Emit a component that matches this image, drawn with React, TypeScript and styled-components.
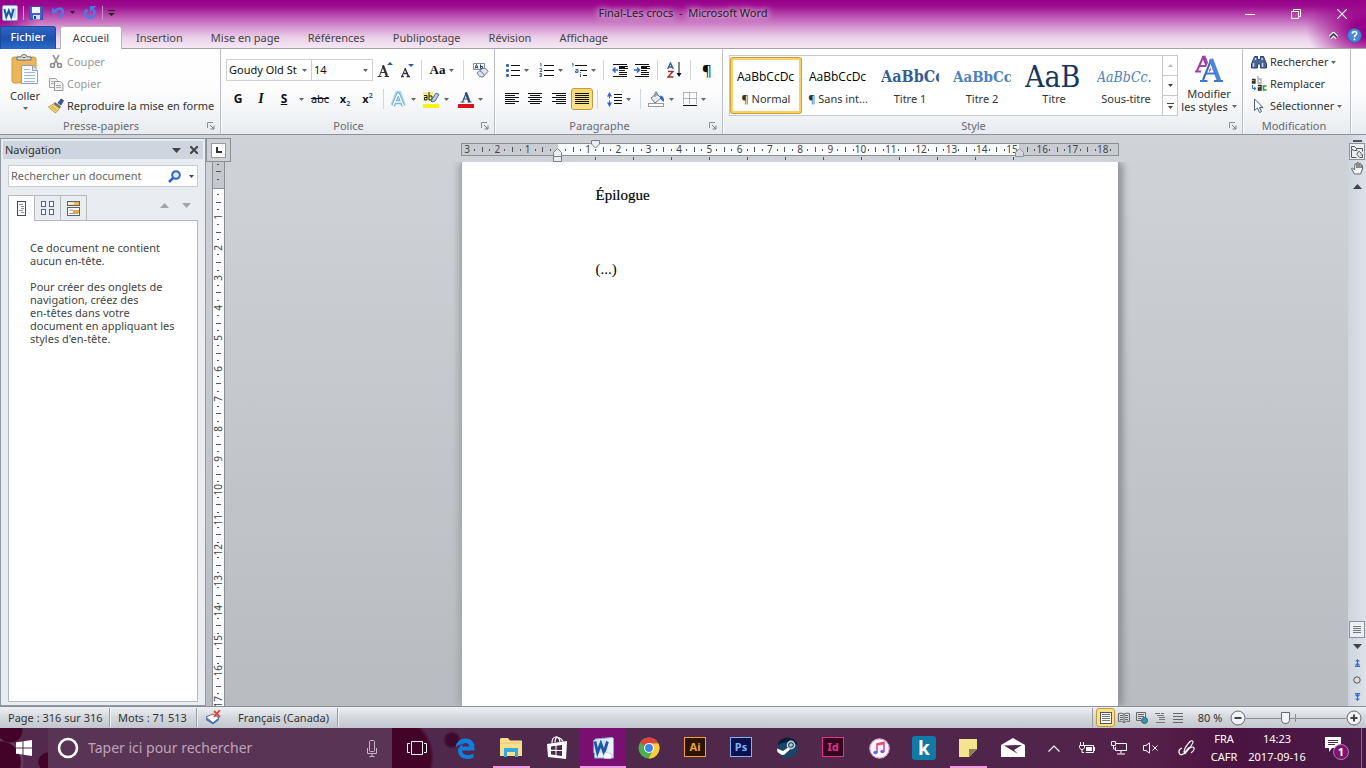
import React from "react";
import styled, { createGlobalStyle, css } from "styled-components";

const Global = createGlobalStyle`
  *, *::before, *::after { box-sizing: border-box; }
  body { margin: 0; font-family: "Noto Sans", "Open Sans", sans-serif; font-size: 11px; line-height: 14px; color: #333; overflow: hidden; }
  button, input, select { font: inherit; color: inherit; margin: 0; padding: 0; border: 0; background: none; }
  button { cursor: pointer; }
  h1, h2, p, ul { margin: 0; padding: 0; font-weight: normal; }
  svg { display: block; flex: none; }
`;

/* ---------- generic pieces ---------- */

const Icon = ({ w = 16, h = 16, box, children }: { w?: number; h?: number; box?: string; children: React.ReactNode }) => (
  <svg width={w} height={h} viewBox={box || `0 0 ${w} ${h}`} fill="none" aria-hidden="true">{children}</svg>
);
const Caret = ({ color = "#666" }: { color?: string }) => (
  <Icon w={5} h={3}><path d="M0 0h5L2.5 3z" fill={color} /></Icon>
);

/* ---------- window ---------- */

const Window = styled.div`
  display: flex; flex-direction: column; height: 100vh; min-height: 500px; background: #c8ccd1;
`;

const Header = styled.header`
  flex: none; display: flex; flex-direction: column; height: 49px;
  border-bottom: 1px solid #a3a1aa;
  background:
    radial-gradient(ellipse 60px 44px at 100% 60%, #98008a 20%, rgba(152, 0, 138, 0) 100%),
    radial-gradient(ellipse 40px 40px at 0 30%, #98008a 10%, rgba(152, 0, 138, 0) 100%),
    linear-gradient(#97008a 0, #9c0c90 6px, #bb55b3 17px, #d596d0 27px, #ecd2ea 38px, #f5e8f4 48px);
`;
const TitleBar = styled.div`
  display: grid; grid-template-columns: 1fr auto 1fr; height: 25px; align-items: center;
`;
const QuickAccess = styled.div`
  display: flex; align-items: center; height: 22px; padding-left: 2px; gap: 5px;
`;
const QuickButton = styled.button<{ $lead?: number }>`
  display: flex; align-items: center; gap: 5px; margin-left: ${p => p.$lead ?? 0}px;
`;
const QuickRule = styled.span`width: 1px; height: 14px; background: #cf8dca;`;
const Title = styled.h1`
  font-size: 11px; line-height: 14px; color: #222; white-space: pre;
  text-shadow: 0 0 6px #fff, 0 0 8px #f3d8f1;
`;
const WindowButtons = styled.div`display: flex; justify-content: flex-end; padding: 3px 1px 0 0;`;
const WindowButton = styled.button`
  width: 46px; height: 22px; display: flex; align-items: center; justify-content: center;
`;

const TabRow = styled.nav`display: flex; align-items: stretch; height: 24px; padding-top: 1px;`;
const Tab = styled.button<{ $active?: boolean; $file?: boolean }>`
  padding: 0 14px; color: #444; height: 23px; white-space: nowrap;
  ${p => p.$file && css`
    width: 56px; padding: 0 0 2px; color: #fff; border: 1px solid #1c4a9c; border-bottom: 0;
    border-radius: 3px 3px 0 0; font-weight: 500; margin-right: 4px;
    background: linear-gradient(#2f66c0, #1c50ad 50%, #2c6ac8);
  `}
  ${p => p.$active && css`
    width: 62px; padding: 0; background: #fff; height: 24px; border: 1px solid #c0aebf; border-bottom: 0;
    border-radius: 3px 3px 0 0; padding-bottom: 2px;
  `}
`;
const TabTools = styled.div`margin-left: auto; display: flex; align-items: center; gap: 9px; padding: 0 4px 4px 0;`;

/* ---------- ribbon ---------- */

const Ribbon = styled.div`
  flex: none; display: flex; height: 86px; border-bottom: 1px solid #8d9299;
  background: linear-gradient(#fff 0, #fdfdfe 50%, #e8ebef 100%);
`;
const Group = styled.section<{ $w: number }>`
  flex: none; width: ${p => p.$w}px; display: flex; flex-direction: column;
  border-right: 1px solid #b9bdc4; box-shadow: 1px 0 #fff;
`;
const GroupBody = styled.div`flex: 1; display: flex; padding: 2px 0 0 5px;`;
const GroupFooter = styled.div`
  height: 17px; display: flex; align-items: center; color: #666a73; padding-right: 5px;
`;
const GroupName = styled.h2`flex: 1; font-size: 11px; line-height: 14px; text-align: center;`;
const Launcher = styled.button`width: 13px; display: flex; justify-content: flex-end;`;
const Tools = styled.div`display: flex; flex-direction: column; padding-top: 8px; gap: 7px;`;
const ToolRow = styled.div`display: flex; align-items: center; height: 22px;`;
const Tool = styled.button<{ $w: number; $on?: boolean }>`
  flex: none; width: ${p => p.$w}px; height: 22px; display: flex; align-items: center; justify-content: center; gap: 4px;
  color: #111;
  ${p => p.$on && css`
    border: 1px solid #c29b3d; border-radius: 3px;
    background: linear-gradient(#fbd86b, #fde58d);
  `}
`;
const ToolRule = styled.span<{ $w: number }>`
  flex: none; width: ${p => p.$w}px; height: 20px; display: flex; justify-content: center;
  &::before { content: ""; width: 1px; background: #d3d6da; }
`;
const LargeTool = styled.button<{ $w: number }>`
  width: ${p => p.$w}px; height: 66px; display: flex; flex-direction: column; align-items: center; padding-top: 3px;
  line-height: 13px;
`;
const LargeLabel = styled.span`
  display: flex; flex-direction: column; align-items: center; padding-top: 4px; gap: 5px; white-space: nowrap;
`;
const InlineLabel = styled.span`display: flex; align-items: center; gap: 4px;`;
const Stack = styled.div`display: flex; flex-direction: column; padding-left: 3px;`;
const SmallTool = styled.button`
  height: 22px; display: flex; align-items: center; gap: 3px; white-space: nowrap; color: #333;
  &:disabled { color: #999; }
`;

const ComboBox = styled.label<{ $w: number }>`
  flex: none; position: relative; width: ${p => p.$w}px; height: 22px; border: 1px solid #cdd0d4; background: #fff;
  margin-right: -1px; display: flex; align-items: center;
  svg { position: absolute; right: 4px; top: 9px; pointer-events: none; }
`;
const Combo = styled.select`
  appearance: none; width: calc(100% - 14px); height: 20px; padding-left: 2px; color: #111; overflow: hidden; text-overflow: clip;
`;

const Letter = styled.span<{ $size?: number; $serif?: boolean; $bold?: boolean; $italic?: boolean; $deco?: string }>`
  font-family: ${p => (p.$serif ? '"Liberation Serif", serif' : '"Noto Sans", sans-serif')};
  font-size: ${p => p.$size ?? 13}px;
  font-weight: ${p => (p.$bold ? 700 : 400)};
  font-style: ${p => (p.$italic ? "italic" : "normal")};
  text-decoration: ${p => p.$deco ?? "none"};
  line-height: 18px;
  sub, sup { font-size: 7px; line-height: 0; color: #2c57a3; }
`;

const Gallery = styled.div`
  display: flex; height: 61px; margin: 4px 0 0 1px; border: 1px solid #c5c8cd; background: #fff;
`;
const StyleCard = styled.button<{ $on?: boolean }>`
  width: 72px; height: 57px; display: flex; flex-direction: column; align-items: stretch; padding: 0 4px; color: #333; overflow: hidden;
  border: 3px solid transparent; margin-top: 1px;
  ${p => p.$on && css`border-color: #fbd25f; border-radius: 3px; outline: 1px solid #c9a13f; outline-offset: -1px;`}
`;
const Sample = styled.span<{ $size: number; $color: string; $serif?: boolean; $bold?: boolean; $italic?: boolean }>`
  height: 32px; line-height: 34px; overflow: hidden; white-space: nowrap; text-align: left;
  font-family: ${p => (p.$serif ? '"DejaVu Serif Condensed", "DejaVu Serif", serif' : '"Open Sans", sans-serif')};
  font-size: ${p => p.$size}px; color: ${p => p.$color};
  font-weight: ${p => (p.$bold ? 700 : 400)}; font-style: ${p => (p.$italic ? "italic" : "normal")};
`;
const SampleName = styled.span`line-height: 14px; text-align: center; white-space: nowrap; margin: 0 -4px;`;
const GalleryScroll = styled.div`width: 15px; display: flex; flex-direction: column; border-left: 1px solid #c5c8cd;`;
const GalleryButton = styled.button`
  flex: 1; display: flex; flex-direction: column; align-items: center; justify-content: center; gap: 2px;
  & + & { border-top: 1px solid #c5c8cd; }
`;

/* ---------- workspace ---------- */

const Workspace = styled.main`
  flex: 1; min-height: 0; display: flex; padding-top: 3px;
  background: linear-gradient(#d0d4d9 0, #c6cacf 40%, #b8bbbf 100%);
`;
const NavPane = styled.aside`
  flex: none; width: 206px; display: flex; flex-direction: column; padding: 2px 2px 3px;
  background: #e9ecf1; border: 1px solid #9399a0;
`;
const PaneHeader = styled.div`
  display: flex; align-items: center; height: 18px; padding-left: 2px; background: #ced5de; color: #333;
`;
const PaneTitle = styled.h2`flex: 1; font-size: 11px; line-height: 14px;`;
const PaneButton = styled.button`width: 18px; height: 16px; display: flex; align-items: center; justify-content: center;`;
const SearchRow = styled.form`
  display: flex; align-items: center; height: 22px; margin: 6px 5px 8px; padding: 0 3px 0 2px; gap: 8px;
  background: #fff; border: 1px solid #c8ccd2;
`;
const SearchInput = styled.input`
  flex: 1; min-width: 0; outline: none;
  &::placeholder { color: #666; opacity: 1; }
`;
const PaneTabs = styled.div`display: flex; align-items: stretch; height: 25px; margin: 0 5px;`;
const PaneTab = styled.button<{ $on?: boolean }>`
  position: relative; width: 27px; margin-right: -1px; border: 1px solid #b4b9c0; display: flex; align-items: center; justify-content: center;
  background: ${p => (p.$on ? "#fff" : "#e9ecf1")}; border-bottom: 0;
  ${p => p.$on && css`z-index: 1; height: 26px;`}
`;
const PaneArrows = styled.div`margin-left: auto; display: flex; align-items: center; gap: 13px; padding: 0 7px 5px 0;`;
const PaneBody = styled.div`
  flex: 1; margin: 0 5px; padding: 20px 20px 0 21px; background: #fff; border: 1px solid #b4b9c0;
  color: #444; line-height: 13px;
  p + p { margin-top: 13px; }
`;

const RulerColumn = styled.div`flex: none; width: 25px; display: flex; flex-direction: column; align-items: center;`;
const TabPicker = styled.button`
  flex: none; width: 25px; height: 24px; border: 1px solid #8b9097; background: #cdd1d6; display: flex; align-items: center; justify-content: center;
`;
const TabPickerFace = styled.span`
  width: 15px; height: 15px; border: 1px solid #999; background: #fff; display: flex; align-items: center; justify-content: center;
`;
const VRuler = styled.div`
  flex: 1; min-height: 0; width: 13px; margin-right: 1px; border: solid #8b9097; border-width: 0 1px; overflow: hidden; display: flex;
  background: linear-gradient(#c5c9ce 26px, #8b9097 26px, #8b9097 27px, #fafbfc 27px);
`;
const VScale = styled.div`
  flex: 1; display: flex; flex-direction: column; margin: -21px 0 -10px; font-size: 10px; line-height: 11px; color: #444;
`;
const HScale = styled.div`
  flex: 1; display: flex; margin-left: -10px; font-size: 10px; line-height: 11px; color: #444;
`;
const HCell = styled.div`flex: 1; min-width: 0; display: flex; align-items: center; justify-content: space-between;`;
const VCell = styled.div`flex: 1; min-height: 0; display: flex; flex-direction: column; align-items: center; justify-content: space-between;`;
const Mark = styled.i<{ $w: number; $h: number }>`flex: none; width: ${p => p.$w}px; height: ${p => p.$h}px; background: ${p => (p.$w && p.$h ? "#555" : "none")};`;
const HNum = styled.span`width: 1px; display: flex; justify-content: center; white-space: nowrap;`;
const VNum = styled.span`height: 1px; display: flex; align-items: center; justify-content: center; white-space: nowrap;
  span { writing-mode: vertical-rl; transform: rotate(180deg); }
`;

const Canvas = styled.div`flex: 1; min-width: 0; display: flex; flex-direction: column; align-items: center; padding-top: 5px;`;
const RulerFrame = styled.div`flex: none; position: relative; width: 658px; height: 19px;`;
const HRuler = styled.div`
  display: flex; height: 13px; overflow: hidden; border: 1px solid #8b9097;
  background: linear-gradient(90deg, #c9cdd2 96px, #fafbfc 96px, #fafbfc 557px, #c9cdd2 557px);
`;
const TabStops = styled.div`
  display: flex; justify-content: space-between; height: 3px; margin: 1px 105px 0 134px;
`;
const Handle = styled.span<{ $x: number; $y: number }>`position: absolute; left: ${p => p.$x}px; top: ${p => p.$y}px;`;
const Page = styled.article`
  flex: 1; min-height: 0; width: 658px; padding: 24px 100px 0 134px; background: #fff; border-right: 1px solid #999da2; border-left: 1px solid #a8acb1;
  box-shadow: 5px 0 7px -1px #8c9096, -4px 0 7px -1px #a3a7ac; clip-path: inset(0 -14px 0 -14px);
  font-family: "Liberation Serif", serif; font-size: 15px; line-height: 18px; color: #000;
  p + p { margin-top: 56px; }
`;
const PageTitle = styled.p`-webkit-text-stroke: 0.2px #000;`;

const ScrollColumn = styled.div`
  flex: none; width: 18px; margin-top: -3px; padding-top: 4px; display: flex; flex-direction: column; align-items: center;
  background: linear-gradient(90deg, #cfd5dd, #dde2e9);
`;
const ScrollButton = styled.button<{ $h: number; $boxed?: boolean }>`
  flex: none; width: 16px; height: ${p => p.$h}px; display: flex; align-items: center; justify-content: center;
  ${p => p.$boxed && css`border: 1px solid #8b9097; background: #eceff3;`}
`;
const ScrollTrack = styled.div`flex: 1; display: flex; align-items: flex-end;`;

/* ---------- status bar ---------- */

const StatusBar = styled.footer`
  flex: none; height: 22px; display: flex; align-items: center; border-top: 1px solid #898e95;
  background: linear-gradient(#eef0f3, #d6dadf 45%, #c2c7cd);
`;
const StatusButton = styled.button<{ $w: number }>`
  flex: none; width: ${p => p.$w}px; height: 19px; text-align: left; padding-left: 8px; white-space: nowrap; display: flex; align-items: center; gap: 16px;
  border-right: 1px solid #9a9fa6; box-shadow: 1px 0 #eef0f3;
`;
const ViewTools = styled.div`margin-left: auto; display: flex; align-items: center; border-left: 1px solid #9a9fa6; padding: 0 4px 0 3px;`;
const ViewButton = styled.button<{ $on?: boolean }>`
  width: 18px; height: 19px; display: flex; align-items: center; justify-content: center;
  ${p => p.$on && css`width: 19px; border: 1px solid #c29b3d; border-radius: 3px; background: #fde18a;`}
`;
const ZoomLevel = styled.button`width: 43px; text-align: center; white-space: nowrap; padding-left: 3px;`;
const ZoomSlider = styled.input`
  appearance: none; width: 100px; height: 14px; display: block;
  background:
    linear-gradient(#8b9097, #8b9097) 49px 3px / 1px 8px no-repeat,
    linear-gradient(#8b9097, #8b9097) 0 7px / 100% 1px no-repeat;
  &::-webkit-slider-thumb {
    appearance: none; width: 9px; height: 12px; border: 1px solid #666b72; border-radius: 1px 1px 5px 5px; background: #f5f6f8;
  }
`;

/* ---------- taskbar ---------- */

const Taskbar = styled.footer`
  flex: none; height: 40px; display: flex; align-items: stretch; color: #fff;
  background:
    radial-gradient(circle at 452px 12px, #3d0a2c 6px, transparent 9px),
    radial-gradient(ellipse 40px 46px at 398px 30px, #430228 80%, transparent 90%),
    linear-gradient(90deg, #50284b 0, #50284b 60%, #50244b 76%, #55204a 84%, #4b1440 90%, #4a1b45 100%);
`;
const StartButton = styled.button`
  flex: none; width: 48px; display: flex; align-items: center; justify-content: center;
  background:
    radial-gradient(circle at 10px 2px, #430228 12px, transparent 13px),
    radial-gradient(circle at 0 34px, #430228 20px, #6a4263 22px, transparent 24px),
    radial-gradient(circle at 48px 34px, #430228 9px, transparent 10px), #532a4d;
`;
const TaskSearch = styled.form`
  flex: none; width: 344px; display: flex; align-items: center; padding: 0 13px 0 9px; gap: 9px; background: #593455;
`;
const TaskInput = styled.input`
  flex: 1; min-width: 0; font-size: 14px; line-height: 20px; outline: none;
  &::placeholder { color: #bda4ba; opacity: 1; }
`;
const TaskButton = styled.button<{ $running?: boolean; $on?: boolean; $w?: number }>`
  flex: none; width: ${p => p.$w ?? 46}px; display: flex; align-items: center; justify-content: center;
  background: ${p => (p.$on ? "linear-gradient(#f19be4, #f19be4) 0 100% / 100% 2px no-repeat, #790f70"
    : p.$running ? "linear-gradient(#f19be4, #f19be4) 50% 100% / 37px 2px no-repeat" : "none")};
`;
const Tray = styled.div`margin-left: auto; display: flex; align-items: stretch; font-size: 11px; line-height: 18px;`;
const TrayButton = styled.button<{ $w: number }>`
  width: ${p => p.$w}px; display: flex; flex-direction: column; align-items: center; justify-content: center; white-space: nowrap;
`;
const ShowDesktop = styled.button`width: 5px; border-left: 1px solid #8a6a87;`;
const AdobeTile = styled.span<{ $line: string; $bg: string }>`
  width: 22px; height: 20px; display: flex; align-items: center; justify-content: center; font-weight: 700; font-size: 11px; line-height: 14px;
  border: 1px solid ${p => p.$line}; color: ${p => p.$line}; background: ${p => p.$bg}; margin-bottom: 3px;
`;

/* ---------- drawings ---------- */

const WordLogo = ({ size = 16 }: { size?: number }) => (
  <Icon w={size} h={size} box="0 0 16 16">
    <rect x=".5" y=".5" width="15" height="15" rx="1.5" fill="#eef5fd" stroke="#7fa9da" />
    <path d="M9 3h5v10H9z" fill="#c4dcf4" />
    <path d="M2.400 4l1.900 8L6.800 5.500 9.200 12l2.400-8" stroke="#1d56a5" strokeWidth="2" />
  </Icon>
);
const TaskWordLogo = () => (
  <Icon w={23} h={23}>
    <path d="M3 2l17-1.500q1.500 0 1.500 1.500v19H2.500z" fill="#e9f2fc" stroke="#7fa9da" />
    <path d="M1.500 3h14v13h-14z" fill="#cfe3f8" />
    <path d="M3 4.500l2.500 11 3.300-9 3.200 9 3.500-11" stroke="#1d56a5" strokeWidth="2.800" />
    <path d="M11 20l2.500-5 7 2.500-1.500 4h-6z" fill="#fff" stroke="#b6cdea" />
  </Icon>
);
const lines = (ys: number[], x: number, w: number, color = "#111") =>
  ys.map((y, i) => <path key={i} d={`M${x} ${y + 0.5}h${w}`} stroke={color} />);

const AlignIcon = ({ kind }: { kind: "left" | "center" | "right" | "full" }) => (
  <Icon w={14} h={12}>
    {[0, 2, 4, 6, 8, 10].map((y, i) => {
      const w = kind === "full" || i % 2 === 0 ? 14 : 10;
      const x = kind === "right" ? 14 - w : kind === "center" ? (14 - w) / 2 : 0;
      return <path key={y} d={`M${x} ${y + 0.5}h${w}`} stroke="#111" />;
    })}
  </Icon>
);
const BulletIcon = () => (
  <Icon w={14} h={13}>
    {[1, 6, 11].map(y => <g key={y}><rect x="0" y={y - 1} width="3" height="3" rx="1" fill="#3a62ad" /><path d={`M5 ${y + 0.5}h9`} stroke="#111" /></g>)}
  </Icon>
);
const NumberIcon = () => (
  <Icon w={15} h={14}>
    <path d="M1 1l1-.5v3M.5 5.500h2v1.500l-1.500 1.500h2M.5 10.500h2v3h-2m0-1.500h2" stroke="#3a62ad" />
    {lines([2, 7, 12], 5, 10)}
  </Icon>
);
const MultiIcon = () => (
  <Icon w={16} h={15}>
    <path d="M1 1l1-.5v3M4.500 6.500h2.500v3h-2.500v-1.500h2.500M9.500 11v3M9.500 9v1" stroke="#3a62ad" />
    {lines([2], 4, 12)}{lines([7], 9, 7)}{lines([12], 12, 4)}
  </Icon>
);
const IndentIcon = ({ out }: { out?: boolean }) => (
  <Icon w={16} h={13}>
    {lines([0, 12], 1, 14)}{lines([2, 4], 7, 9)}{lines([3, 6], 7, 6)}{lines([8, 10], 7, 8)}
    {out ? <path d="M6 6H1.500M3.500 3.500L1 6l2.500 2.500" stroke="#2f66c0" strokeWidth="1.500" /> : <path d="M0 6h5M3 3.500L5.500 6 3 8.500" stroke="#2f66c0" strokeWidth="1.500" />}
  </Icon>
);
const SortIcon = () => (
  <Icon w={15} h={16}>
    <path d="M.7 7L3.500 1l2.800 6M1.500 5h4" stroke="#2c57a3" strokeWidth="1.300" />
    <path d="M1 9.500h5L1 15h5.500" stroke="#96332c" strokeWidth="1.400" />
    <path d="M12 0v13" stroke="#111" /><path d="M9.500 11h5L12 15z" fill="#111" />
  </Icon>
);
const SpacingIcon = () => (
  <Icon w={15} h={15}>
    <path d="M2.500 1v13" stroke="#2f66c0" /><path d="M0 4.500L2.500 0 5 4.500zM0 10.500L2.500 15 5 10.500z" fill="#2f66c0" /><path d="M1 7.500h3" stroke="#fdfdfe" strokeWidth="2" />
    {lines([2, 5, 8, 11], 7, 8)}
  </Icon>
);
const FillIcon = () => (
  <Icon w={17} h={16}>
    <path d="M3 7l5.500-4.500L13 7l-6 5z" fill="#e7ecf3" stroke="#6a7687" /><path d="M7 6V1.500Q8 0 9 1.500V5" stroke="#6a7687" />
    <path d="M12 4.500q4.500 0 4 6.500-2-1-3.500-3z" fill="#2f66c0" /><rect x=".5" y="12.500" width="15" height="3" fill="#fff" stroke="#999" />
  </Icon>
);
const BordersIcon = () => (
  <Icon w={14} h={14}>
    <path d="M.5 .5h13M.5 .5v12M6.500 .5v12M13.500 .5v12M.5 6.500h13" stroke="#777" strokeDasharray="1 1" /><path d="M0 13.500h14" stroke="#111" />
  </Icon>
);
const GrowIcon = ({ down }: { down?: boolean }) => (
  <Icon w={16} h={18}>
    {down
      ? <><path d="M3 15L6 8M6 7l3.500 8" stroke="#333" /><path d="M6 7.500l3.200 7.500M4 12.500h4M2 15.500h3M7.500 15.500h3.500" stroke="#333" strokeWidth="1.300" /><path d="M9 3h6l-3 3z" fill="#2c57a3" /></>
      : <><path d="M2.500 15L6.500 4" stroke="#333" /><path d="M6 4.500L10 15" stroke="#333" strokeWidth="2.200" /><path d="M4 11.500h5M.5 15.500h4M7.500 15.500H12" stroke="#333" /><path d="M10 4h6l-3-3z" fill="#2c57a3" /></>}
  </Icon>
);
const ClearIcon = () => (
  <Icon w={17} h={17}>
    <path d="M1.500 1.500h11v6h-11z" fill="#fff" stroke="#7a8ba8" /><path d="M3 6.500l1.500-4L6 6.500M3.500 5.500h2M8.500 2.500v4h2v-2h-2" stroke="#2b3d66" />
    <path d="M5 11l5.500-4.500q4-1 5.500 3L11 15q-4 1-6-4z" fill="#dfe4ef" stroke="#6d7898" /><path d="M8 9q3 1 4 4" stroke="#6d7898" />
  </Icon>
);
const GlowAIcon = () => (
  <Icon w={17} h={17}>
    <path d="M3 14.500L7.500 2.500h1.500L13.500 14.500M5 11h6.500" stroke="#a9d6f2" strokeWidth="5" /><path d="M3 15L8 3h.5L13.500 15M5 11h6.500" stroke="#5a9ccb" strokeWidth="3" /><path d="M3 15L8 3h.5L13.500 15M5 11h6.500" stroke="#fff" strokeWidth="1.600" />
  </Icon>
);
const HighlightIcon = () => (
  <Icon w={17} h={17}>
    <path d="M0 1h10v9H0z" fill="#f4ee7a" /><path d="M1 4.500h3V9H1.500V6.500H4M6 1v8h3V5H6" stroke="#222" />
    <path d="M8 10l5-8 3 1.500L12 10l-3 1z" fill="#b9cbe9" stroke="#4a67a0" /><path d="M0 13h16v4H0z" fill="#f7f21c" />
  </Icon>
);
const FontColorIcon = () => (
  <Icon w={16} h={17}>
    <path d="M4.500 11L8.500 1.500" stroke="#2a4a8c" strokeWidth="1.200" /><path d="M7.800 1.500L11.500 11" stroke="#2a4a8c" strokeWidth="2.400" /><path d="M5.500 8h5M2.500 11h4M9.500 11h4" stroke="#2a4a8c" strokeWidth="1.200" /><path d="M0 13h16v4H0z" fill="#d8141a" />
  </Icon>
);
const PasteIcon = () => (
  <Icon w={28} h={31}>
    <rect x="1" y="3" width="24" height="26" rx="2" fill="#eab659" stroke="#d09a42" />
    <path d="M6 6V3h4q0-2.500 3-2.500t3 2.500h4v3z" fill="#e3e5e7" stroke="#676c74" /><path d="M11.500 3.500h3" stroke="#555" />
    <path d="M10.500 11.500h11l5 5v13h-16z" fill="#fff" stroke="#8ba0bf" /><path d="M21.500 11.500v5h5" fill="#dbe6f5" stroke="#8ba0bf" />
    <path d="M13 15.500h6M13 18.500h11M13 21.500h11M13 24.500h11M13 27.500h11" stroke="#9db7dd" />
  </Icon>
);
const CutIcon = () => (
  <Icon><path d="M5 1l5 9M11 1l-5 9" stroke="#999" strokeWidth="1.700" /><circle cx="4.500" cy="11.500" r="2" stroke="#888" strokeWidth="1.500" /><circle cx="11.500" cy="11.500" r="2" stroke="#888" strokeWidth="1.500" /></Icon>
);
const CopyIcon = () => (
  <Icon><path d="M1.500 2.500h6l2 2v7h-8z" fill="#f3f3f3" stroke="#a0a0a0" /><path d="M6.500 5.500h6l2.500 2.500v6.500H6.500z" fill="#f3f3f3" stroke="#999" /><path d="M3 5.500h4M3 7.500h3M8 9.500h5M8 11.500h5" stroke="#aaa" /></Icon>
);
const BrushIcon = () => (
  <Icon><path d="M10 5l3-4 2.500 1.500L13 7z" fill="#3a55a0" stroke="#26386f" strokeWidth=".7" /><path d="M7 4l6 4.500-1.500 2L5.500 6z" fill="#6a6f7a" /><path d="M5.500 6l6 4.500L7.500 15 .5 9z" fill="#f5de72" stroke="#a88a2a" strokeWidth=".8" /><path d="M4 8l5 4M3 9l5 4" stroke="#cdae3d" /></Icon>
);
const LauncherIcon = () => (
  <Icon w={8} h={8}><path d="M.5 6V.5H6" stroke="#888c93" /><path d="M3 3l4 4M7 3.500V7H3.500" stroke="#777b82" /></Icon>
);
const StylesIcon = () => (
  <Icon w={31} h={29} box="0 1 31 29">
    <path d="M3 18L9.500 3" stroke="#a23fa8" strokeWidth="2" /><path d="M9.500 3l6 15" stroke="#a23fa8" strokeWidth="3.600" /><path d="M5.500 13h8M1 18.500h6M11 18.500h5" stroke="#a23fa8" strokeWidth="2" />
    <path d="M9 27.500L17 7l8.500 20.500M12 20.500h10M6 28h7.500M20 28h9" stroke="#fff" strokeWidth="4" />
    <path d="M9 27L17.500 6" stroke="#3568bd" strokeWidth="2" /><path d="M17 6l8 21.500" stroke="#4a86dc" strokeWidth="4.400" /><path d="M12 20.500h10M6 28h7.500M20 28h9" stroke="#3f78cf" strokeWidth="2" />
  </Icon>
);
const BinocularsIcon = () => (
  <Icon><path d="M3.500 2.500h3v3h3v-3h3l3 7.500v4h-6v-4h-3v4h-6v-4z" fill="#4a6597" stroke="#2b4070" /><path d="M2.500 9v4M11.500 9v4M4.500 4v2M11 4v2" stroke="#c8d8f2" strokeWidth="1.500" /></Icon>
);
const ReplaceIcon = () => (
  <Icon w={16} h={16}>
    <path d="M1 3.500h3V7H1.500V5.500H4" stroke="#333" strokeWidth="1.300" /><path d="M7 0v7h3V3H7" stroke="#aaa" strokeWidth="1.300" />
    <path d="M1.500 9v3.500h3M3 11l2 1.500L3 14" stroke="#2f66c0" /><path d="M7 9.500h3V14H7.500v-2H10" stroke="#222" strokeWidth="1.400" /><path d="M15.500 10h-3v4h3" stroke="#2a9a2e" strokeWidth="1.600" />
  </Icon>
);
const CursorIcon = () => (
  <Icon><path d="M3.500 1v11.500l3-2.500 2 4.500 2-1-2-4H12z" fill="#fff" stroke="#4a5f85" /></Icon>
);
const Triangle = ({ up, color = "#444", w = 9 }: { up?: boolean; color?: string; w?: number }) => (
  <Icon w={w} h={5} box="0 0 9 5"><path d={up ? "M0 5h9L4.500 0z" : "M0 0h9L4.500 5z"} fill={color} /></Icon>
);
const PageTabIcon = () => (
  <Icon w={9} h={15}><rect x=".5" y=".5" width="8" height="14" fill="#fff" stroke="#444c5c" /><path d="M2 3.500h4M4 5.500h3M4 7.500h3M2 9.500h4M4 11.500h3" stroke="#8a92a2" /></Icon>
);
const ThumbsIcon = () => (
  <Icon w={13} h={14}>{[[0, 0], [8, 0], [0, 8], [8, 8]].map(([x, y]) => <rect key={`${x}${y}`} x={x + .5} y={y + .5} width="4" height="5" fill="#fff" stroke="#4d6189" />)}</Icon>
);
const ResultsIcon = () => (
  <Icon w={13} h={15}><rect x=".5" y=".5" width="12" height="4" fill="#f3b73d" stroke="#5a6270" /><path d="M1 2.500h6" stroke="#fff" strokeWidth="2" /><rect x=".5" y="6.500" width="12" height="8" fill="#fff" stroke="#5a6270" /><path d="M2 9h4" stroke="#9aa3b3" /><path d="M6 10.500h6" stroke="#f0a92a" strokeWidth="3" /><path d="M2 12.500h9" stroke="#9aa3b3" /></Icon>
);
const UndoIcon = () => (
  <Icon w={14} h={14}><path d="M1 1.500v6h6z" fill="#4a7be0" /><path d="M4 5q4-4 7-1.500 2.500 3.500-3 8.500" stroke="#4a7be0" strokeWidth="2.600" /></Icon>
);
const RedoIcon = () => (
  <Icon w={14} h={14}><path d="M4.500 3.500q-4 3-1.500 6.500 4 3.500 7.500 0 2.500-4-.5-6.500" stroke="#4a7be0" strokeWidth="2.600" /><path d="M7 0h6.500L7 6z" fill="#4a7be0" /></Icon>
);
const SaveIcon = () => (
  <Icon w={14} h={14}><path d="M.5 .5h13v13h-12l-1-1z" fill="#4a5fc4" stroke="#3a4ba8" /><path d="M3 1h8v6H3z" fill="#f2f4fb" /><path d="M4 9h7v4.500H4z" fill="#d8ddec" /><path d="M5 10h2v3H5z" fill="#26388e" /></Icon>
);
const Chrome = () => (
  <Icon w={22} h={22}><circle cx="11" cy="11" r="10.500" fill="#4caf50" /><path d="M11 11L2 5.700A10.500 10.500 0 0 1 20.500 6.500H11z" fill="#e0453a" /><path d="M11 11l4 2-4.500 8.500A10.500 10.500 0 0 0 20.500 6.500H11z" fill="#fccd3a" /><circle cx="11" cy="11" r="5" fill="#fff" /><circle cx="11" cy="11" r="3.900" fill="#3f83ee" /></Icon>
);
const Edge = () => (
  <Icon w={20} h={21}><path d="M.5 9.500Q2 .5 10.500.5q9 0 9 9.500v2.500H7q.5 4.500 6 4.500 3 0 5.500-1.500v4Q15.500 21 12 21 4 20.500 3 13.500q0-5 5-7.500-5 .5-7.500 3.500zM7 8.500h7Q14 5 10.500 5 7.500 5 7 8.500z" fill="#0f7fdb" /></Icon>
);
const Explorer = () => (
  <Icon w={22} h={20}><path d="M0 1.500q0-1.500 1.500-1.500H8l2 2.500h12V18H0z" fill="#f8df8f" /><path d="M0 5h22" stroke="#edc760" /><path d="M4 10h14v9h-3v-5H7v5H4z" fill="#35a9dc" /></Icon>
);
const Store = () => (
  <Icon w={22} h={24}><path d="M1 8l20-3-1 18L2 21z" fill="#fff" /><path d="M6 7q0-5.500 3.500-6T14 6M9 6.500Q9 1 12 1.500T17 5.500" stroke="#fff" strokeWidth="1.200" /><path d="M5 10.500l4.500-.7v4H5zM10.500 9.700l5.500-.8v5h-5.500zM5 15h4.500v4L5 18.500zM10.500 15H16v5l-5.500-.7z" fill="#50284b" /></Icon>
);
const Steam = () => (
  <Icon w={23} h={22}><circle cx="11.500" cy="11" r="10.500" fill="#1a4468" /><path d="M2 6Q6 0 12 .5q8 .5 10 8Q12 2 2 8z" fill="#0d1e38" /><circle cx="15" cy="8" r="3.600" stroke="#c5d0dc" strokeWidth="1.600" /><circle cx="15" cy="8" r="1.800" fill="#b9c8d8" /><path d="M1 11.500l6 2.500 5-3.500 2 2-4 3.500q-2 3-5 1.500L1.500 15z" fill="#fff" /></Icon>
);
const Music = () => (
  <Icon w={21} h={21}><circle cx="10.500" cy="10.500" r="9.700" fill="#fbf7fb" stroke="#d9a5cf" strokeWidth="1.200" /><path d="M8 14.500V6l7-1.500v9" stroke="#d8428a" strokeWidth="1.500" /><path d="M8 6.500l7-1.500" stroke="#ea4a6a" strokeWidth="2.500" /><ellipse cx="6.500" cy="14.500" rx="2.200" ry="1.800" fill="#5a6ee0" /><ellipse cx="13.500" cy="13.500" rx="2.200" ry="1.800" fill="#8a55d6" /></Icon>
);
const KTile = styled.span`
  width: 24px; height: 24px; border-radius: 3px; background: #0f7ba6; display: flex; align-items: center; justify-content: center;
  font-size: 19px; line-height: 20px; font-weight: 700;
`;

/* ---------- data ---------- */

const tabs = ["Insertion", "Mise en page", "Références", "Publipostage", "Révision", "Affichage"];
const styleCards = [
  { name: "¶ Normal", sample: "AaBbCcDc", size: 12, color: "#000", on: true },
  { name: "¶ Sans int...", sample: "AaBbCcDc", size: 12, color: "#000" },
  { name: "Titre 1", sample: "AaBbCc", size: 16, color: "#365f91", serif: true, bold: true },
  { name: "Titre 2", sample: "AaBbCc", size: 15, color: "#4f81bd", serif: true, bold: true },
  { name: "Titre", sample: "AaB", size: 30, color: "#17365d", serif: true },
  { name: "Sous-titre", sample: "AaBbCc.", size: 14, color: "#4f81bd", serif: true, italic: true },
];
const hNumbers = Array.from({ length: 22 }, (_, i) => i - 3);
const vNumbers = Array.from({ length: 19 }, (_, i) => i - 1);

const Footer = ({ name, launcher = true }: { name: string; launcher?: boolean }) => (
  <GroupFooter><GroupName>{name}</GroupName>{launcher && <Launcher aria-label={`Options ${name}`}><LauncherIcon /></Launcher>}</GroupFooter>
);

export default function App() {
  return (
    <Window>
      <Global />
      <Header>
        <TitleBar>
          <QuickAccess>
            <WordLogo />
            <QuickRule />
            <QuickButton aria-label="Enregistrer"><SaveIcon /></QuickButton>
            <QuickButton $lead={3} aria-label="Annuler"><UndoIcon /><Caret color="#222" /></QuickButton>
            <QuickButton $lead={3} aria-label="Rétablir"><RedoIcon /></QuickButton>
            <QuickRule />
            <QuickButton aria-label="Personnaliser"><Icon w={7} h={6}><path d="M0 .5h7" stroke="#222" /><path d="M0 3h7L3.500 6z" fill="#222" /></Icon></QuickButton>
          </QuickAccess>
          <Title>{"Final-Les crocs  -  Microsoft Word"}</Title>
          <WindowButtons>
            <WindowButton aria-label="Réduire"><Icon w={10} h={10}><path d="M0 5.500h10" stroke="#fff" /></Icon></WindowButton>
            <WindowButton aria-label="Restaurer"><Icon w={10} h={10}><path d="M.5 2.500h7v7h-7zM2.500 2V.5h7v7H8" stroke="#fff" /></Icon></WindowButton>
            <WindowButton aria-label="Fermer"><Icon w={10} h={10}><path d="M0 0l10 10M10 0L0 10" stroke="#fff" strokeWidth="1.200" /></Icon></WindowButton>
          </WindowButtons>
        </TitleBar>
        <TabRow>
          <Tab $file>Fichier</Tab>
          <Tab $active>Accueil</Tab>
          {tabs.map(t => <Tab key={t}>{t}</Tab>)}
          <TabTools>
            <button aria-label="Réduire le ruban"><Icon w={9} h={7}><path d="M1 5.500l3.500-3.500L8 5.500" stroke="#fff" strokeWidth="4" /><path d="M1 5.500l3.500-3.500L8 5.500" stroke="#444" strokeWidth="1.800" /></Icon></button>
            <button aria-label="Aide"><Icon w={15} h={15}><circle cx="7.500" cy="7.500" r="7" fill="#4886d8" stroke="#2c5ea8" /><path d="M5.300 5.800q0-2.300 2.200-2.300t2.200 2q0 1.200-2.100 2.500v1.200M7.500 10.500v1.700" stroke="#fff" strokeWidth="1.600" /></Icon></button>
          </TabTools>
        </TabRow>
      </Header>

      <Ribbon>
        <Group $w={221}>
          <GroupBody>
            <LargeTool $w={40}><PasteIcon /><LargeLabel>Coller<Caret /></LargeLabel></LargeTool>
            <Stack>
              <SmallTool disabled><CutIcon />Couper</SmallTool>
              <SmallTool disabled><CopyIcon />Copier</SmallTool>
              <SmallTool><BrushIcon />Reproduire la mise en forme</SmallTool>
            </Stack>
          </GroupBody>
          <Footer name="Presse-papiers" />
        </Group>

        <Group $w={274}>
          <GroupBody>
            <Tools>
              <ToolRow>
                <ComboBox $w={86}><Combo aria-label="Police"><option>Goudy Old Style</option></Combo><Caret /></ComboBox>
                <ComboBox $w={62}><Combo aria-label="Taille de police"><option>14</option></Combo><Caret /></ComboBox>
                <Tool $w={25} aria-label="Agrandir la police"><GrowIcon /></Tool>
                <Tool $w={20} aria-label="Réduire la police"><GrowIcon down /></Tool>
                <ToolRule $w={8} />
                <Tool $w={34} aria-label="Modifier la casse"><Letter $serif $bold $size={13}>Aa</Letter><Caret /></Tool>
                <ToolRule $w={9} />
                <Tool $w={24} aria-label="Effacer la mise en forme"><ClearIcon /></Tool>
              </ToolRow>
              <ToolRow>
                <Tool $w={24}><Letter $bold $size={12}>G</Letter></Tool>
                <Tool $w={22}><Letter $serif $italic $bold $size={14}>I</Letter></Tool>
                <Tool $w={24}><Letter $bold $deco="underline" $size={12}>S</Letter></Tool>
                <Tool $w={10} aria-label="Style de soulignement"><Caret /></Tool>
                <Tool $w={28}><Letter $deco="line-through" $size={11}>abc</Letter></Tool>
                <Tool $w={22}><Letter $bold $size={11}>x<sub>2</sub></Letter></Tool>
                <Tool $w={23}><Letter $bold $size={11}>x<sup>2</sup></Letter></Tool>
                <ToolRule $w={8} />
                <Tool $w={32} aria-label="Effets de texte"><GlowAIcon /><Caret /></Tool>
                <Tool $w={34} aria-label="Surlignage"><HighlightIcon /><Caret /></Tool>
                <Tool $w={34} aria-label="Couleur de police"><FontColorIcon /><Caret /></Tool>
              </ToolRow>
            </Tools>
          </GroupBody>
          <Footer name="Police" />
        </Group>

        <Group $w={228}>
          <GroupBody>
            <Tools>
              <ToolRow>
                <Tool $w={34} aria-label="Puces"><BulletIcon /><Caret /></Tool>
                <Tool $w={34} aria-label="Numérotation"><NumberIcon /><Caret /></Tool>
                <Tool $w={30} aria-label="Liste à plusieurs niveaux"><MultiIcon /><Caret /></Tool>
                <ToolRule $w={11} />
                <Tool $w={22} aria-label="Diminuer le retrait"><IndentIcon out /></Tool>
                <Tool $w={22} aria-label="Augmenter le retrait"><IndentIcon /></Tool>
                <ToolRule $w={8} />
                <Tool $w={26} aria-label="Trier"><SortIcon /></Tool>
                <ToolRule $w={7} />
                <Tool $w={26}><Letter $size={15}>¶</Letter></Tool>
              </ToolRow>
              <ToolRow>
                <Tool $w={24} aria-label="Aligner à gauche"><AlignIcon kind="left" /></Tool>
                <Tool $w={22} aria-label="Centrer"><AlignIcon kind="center" /></Tool>
                <Tool $w={25} aria-label="Aligner à droite"><AlignIcon kind="right" /></Tool>
                <Tool $w={22} $on aria-label="Justifier"><AlignIcon kind="full" /></Tool>
                <ToolRule $w={9} />
                <Tool $w={34} aria-label="Interligne"><SpacingIcon /><Caret /></Tool>
                <ToolRule $w={9} />
                <Tool $w={32} aria-label="Trame de fond"><FillIcon /><Caret /></Tool>
                <Tool $w={34} aria-label="Bordures"><BordersIcon /><Caret /></Tool>
              </ToolRow>
            </Tools>
          </GroupBody>
          <Footer name="Paragraphe" />
        </Group>

        <Group $w={520}>
          <GroupBody>
            <Gallery>
              {styleCards.map(c => (
                <StyleCard key={c.name} $on={c.on}>
                  <Sample $size={c.size} $color={c.color} $serif={c.serif} $bold={c.bold} $italic={c.italic}>{c.sample}</Sample>
                  <SampleName>{c.name}</SampleName>
                </StyleCard>
              ))}
              <GalleryScroll>
                <GalleryButton aria-label="Ligne précédente"><Triangle up color="#bbb" w={5} /></GalleryButton>
                <GalleryButton aria-label="Ligne suivante"><Caret color="#444" /></GalleryButton>
                <GalleryButton aria-label="Autres"><Icon w={7} h={6}><path d="M0 .5h7" stroke="#444" /><path d="M1 3h5L3.500 6z" fill="#444" /></Icon></GalleryButton>
              </GalleryScroll>
            </Gallery>
            <LargeTool $w={62}><StylesIcon /><LargeLabel><span>Modifier<br /><InlineLabel>les styles <Caret /></InlineLabel></span></LargeLabel></LargeTool>
          </GroupBody>
          <Footer name="Style" />
        </Group>

        <Group $w={108}>
          <GroupBody>
            <Stack>
              <SmallTool><BinocularsIcon />Rechercher<Caret /></SmallTool>
              <SmallTool><ReplaceIcon />Remplacer</SmallTool>
              <SmallTool><CursorIcon />Sélectionner<Caret /></SmallTool>
            </Stack>
          </GroupBody>
          <Footer name="Modification" launcher={false} />
        </Group>
      </Ribbon>

      <Workspace>
        <NavPane>
          <PaneHeader>
            <PaneTitle>Navigation</PaneTitle>
            <PaneButton aria-label="Options du volet"><Triangle /></PaneButton>
            <PaneButton aria-label="Fermer le volet"><Icon w={8} h={8}><path d="M0 0l8 8M8 0L0 8" stroke="#444" strokeWidth="2" /></Icon></PaneButton>
          </PaneHeader>
          <SearchRow>
            <SearchInput aria-label="Rechercher un document" placeholder="Rechercher un document" />
            <Icon w={13} h={13}><circle cx="8" cy="5" r="3.800" fill="#dbe9fa" stroke="#2f66c0" strokeWidth="2" /><path d="M5 8L1 12" stroke="#2f66c0" strokeWidth="2.500" /></Icon>
            <Caret color="#444" />
          </SearchRow>
          <PaneTabs>
            <PaneTab $on aria-label="Titres"><PageTabIcon /></PaneTab>
            <PaneTab aria-label="Pages"><ThumbsIcon /></PaneTab>
            <PaneTab aria-label="Résultats"><ResultsIcon /></PaneTab>
            <PaneArrows><Triangle up color="#a2a5aa" /><Triangle color="#a2a5aa" /></PaneArrows>
          </PaneTabs>
          <PaneBody>
            <p>Ce document ne contient aucun en-tête.</p>
            <p>Pour créer des onglets de navigation, créez des<br />en-têtes dans votre document en appliquant les styles d'en-tête.</p>
          </PaneBody>
        </NavPane>

        <RulerColumn>
          <TabPicker aria-label="Type de tabulation"><TabPickerFace><Icon w={6} h={6}><path d="M1 0v5h5" stroke="#333" strokeWidth="2" /></Icon></TabPickerFace></TabPicker>
          <VRuler>
            <VScale>
              {vNumbers.map(n => (
                <VCell key={n}>
                  <Mark $w={5} $h={1} /><Mark $w={2} $h={1} /><VNum><span>{n > 0 ? n : ""}</span></VNum><Mark $w={2} $h={1} /><Mark $w={0} $h={0} />
                </VCell>
              ))}
            </VScale>
          </VRuler>
        </RulerColumn>

        <Canvas>
          <RulerFrame>
            <HRuler>
              <HScale>
                {hNumbers.map(n => (
                  <HCell key={n}>
                    <Mark $w={1} $h={5} /><Mark $w={1} $h={2} /><HNum>{n === 0 ? "" : Math.abs(n)}</HNum><Mark $w={1} $h={2} /><Mark $w={0} $h={0} />
                  </HCell>
                ))}
              </HScale>
            </HRuler>
            <TabStops>{hNumbers.slice(0, 12).map(n => <Mark key={n} $w={1} $h={3} />)}</TabStops>
            <Handle $x={92} $y={5}><Icon w={9} h={14}><path d="M.5 8.500V4.500l4-4 4 4v4zM.5 8.500h8v5h-8z" fill="#eceef0" stroke="#777c83" /></Icon></Handle>
            <Handle $x={130} $y={-3}><Icon w={9} h={9}><path d="M.5 .5h8V4L4.500 8 .5 4z" fill="#eceef0" stroke="#777c83" /></Icon></Handle>
            <Handle $x={554} $y={5}><Icon w={9} h={9}><path d="M.5 8.500V4.500l4-4 4 4v4z" fill="#d5d8dc" stroke="#8f949a" /></Icon></Handle>
          </RulerFrame>
          <Page>
            <PageTitle>Épilogue</PageTitle>
            <p>(...)</p>
          </Page>
        </Canvas>

        <ScrollColumn>
          <ScrollButton $h={4} aria-label="Fractionner"><Icon w={9} h={2}><path d="M0 1h9" stroke="#555" strokeWidth="2" /></Icon></ScrollButton>
          <ScrollButton $h={17} $boxed aria-label="Règle"><Icon w={12} h={12}><path d="M.5 3.500V.5h3l2 2v2h-2zM5.500 2.500h6v3M.5 4v7.500h5M6.500 6.500l2-1 3 3.500v2.500h-3L6 8.500zM6.500 4.500l1 1M9 8.500l1 1" stroke="#555" /></Icon></ScrollButton>
          <ScrollButton $h={17} aria-label="Main"><Icon w={12} h={13}><path d="M3.500 8L1.500 6Q.3 6 .7 7l2.800 5h6l2-5V3.500q-1-1-1.500 0V6 2q-1-1.200-2 0v4V1Q7-.2 6 1v5V2q-1-1-2 0z" fill="#f5f6f8" stroke="#666" /></Icon></ScrollButton>
          <ScrollButton $h={18} aria-label="Défiler vers le haut"><Triangle up /></ScrollButton>
          <ScrollTrack><ScrollButton $h={17} $boxed aria-label="Position"><Icon w={8} h={8}><path d="M0 .5h8M0 2.500h8M0 4.500h8M0 6.500h8" stroke="#777" /></Icon></ScrollButton></ScrollTrack>
          <ScrollButton $h={16} aria-label="Défiler vers le bas"><Triangle /></ScrollButton>
          <ScrollButton $h={18} aria-label="Page précédente"><Icon w={7} h={8}><path d="M3.500 0L6 2.500H1zM3.500 3.500L6.500 6.500H.5z" fill="#2f6fe0" /><path d="M1 7.500h5M3.500 2v5" stroke="#2f6fe0" /></Icon></ScrollButton>
          <ScrollButton $h={16} aria-label="Parcourir"><Icon w={8} h={8}><circle cx="4" cy="4" r="3.200" fill="#ddd" stroke="#555" /></Icon></ScrollButton>
          <ScrollButton $h={18} aria-label="Page suivante"><Icon w={7} h={8}><path d="M.5 1.500h6L3.500 4.500zM1 5.500h5L3.500 8z" fill="#2f6fe0" /><path d="M1 .5h5M3.500 1v5" stroke="#2f6fe0" /></Icon></ScrollButton>
        </ScrollColumn>
      </Workspace>

      <StatusBar>
        <StatusButton $w={110}>Page : 316 sur 316</StatusButton>
        <StatusButton $w={87}>Mots : 71 513</StatusButton>
        <StatusButton $w={141}>
          <Icon w={17} h={15}><path d="M1 7l7-3 6 4-6 5z" fill="#fff" stroke="#5a6a8a" /><path d="M1 8v2l7 4.500 6-4.500V8l-6 4.500z" fill="#3f6fc8" /><path d="M9 1l6 6M15 0L9 7" stroke="#e0452c" strokeWidth="1.800" /></Icon>
          Français (Canada)
        </StatusButton>
        <ViewTools>
          <ViewButton $on aria-label="Page"><Icon w={12} h={12}><rect x=".5" y=".5" width="11" height="11" fill="#fff" stroke="#555" /><path d="M2 2.500h8M2 4.500h8M2 6.500h8M2 8.500h8" stroke="#777" /></Icon></ViewButton>
          <ViewButton aria-label="Lecture plein écran"><Icon w={12} h={12}><path d="M.5 1.500q3-1 5.500.5 2.500-1.500 5.500-.5v8q-3-1-5.500 1-2.500-2-5.500-1zM6 2v9M2 3.500h3M2 5.500h3M2 7.500h3M7 3.500h3M7 5.500h3M7 7.500h3" stroke="#666" /></Icon></ViewButton>
          <ViewButton aria-label="Web"><Icon w={12} h={12}><path d="M.5 .5h9v8h-9zM2 2.500h6M2 4.500h6M2 6.500h3" stroke="#666" /><circle cx="8.500" cy="8.500" r="3" fill="#3d9a8f" stroke="#2a5fa0" /></Icon></ViewButton>
          <ViewButton aria-label="Plan"><Icon w={10} h={10}><path d="M0 .5h5M6 .5h3M2 2.500h7M4 4.500h6M4 6.500h6M1 9.500h9" stroke="#777" /></Icon></ViewButton>
          <ViewButton aria-label="Brouillon"><Icon w={10} h={10}><path d="M0 .5h10M0 3.500h10M0 6.500h10M0 9.500h10" stroke="#666" /></Icon></ViewButton>
          <ZoomLevel>80 %</ZoomLevel>
          <button aria-label="Zoom arrière"><Icon w={16} h={16}><circle cx="8" cy="8" r="7" fill="#f0f2f4" stroke="#666b72" /><path d="M4.500 8h7" stroke="#444" strokeWidth="2" /></Icon></button>
          <ZoomSlider type="range" min={0} max={100} defaultValue={39} aria-label="Zoom" />
          <button aria-label="Zoom avant"><Icon w={16} h={16}><circle cx="8" cy="8" r="7" fill="#f0f2f4" stroke="#666b72" /><path d="M4.500 8h7M8 4.500v7" stroke="#444" strokeWidth="2" /></Icon></button>
        </ViewTools>
      </StatusBar>

      <Taskbar>
        <StartButton aria-label="Démarrer"><Icon w={16} h={16}><path d="M0 2.300l6.500-.9v6.100H0zM7.500 1.200L16 0v7.500H7.500zM0 8.500h6.500v6.100L0 13.700zM7.500 8.500H16V16l-8.500-1.200z" fill="#fff" /></Icon></StartButton>
        <TaskSearch>
          <Icon w={22} h={22}><circle cx="11" cy="11" r="9" stroke="#fff" strokeWidth="2.600" /></Icon>
          <TaskInput aria-label="Taper ici pour rechercher" placeholder="Taper ici pour rechercher" />
          <Icon w={13} h={17}><rect x="3.500" y=".5" width="5" height="11" rx="1" stroke="#c9b3c6" /><path d="M1.500 8v5.500h9V8M6 13.500V16M3.500 16.500h5" stroke="#c9b3c6" /></Icon>
        </TaskSearch>
        <TaskButton $w={50} aria-label="Affichage des tâches"><Icon w={20} h={14}><path d="M4.500 .5h11v13h-11zM3 2.500H.5v9H3M17 2.500h2.500v9H17" stroke="#fff" /></Icon></TaskButton>
        <TaskButton aria-label="Edge"><Edge /></TaskButton>
        <TaskButton $running aria-label="Explorateur"><Explorer /></TaskButton>
        <TaskButton aria-label="Store"><Store /></TaskButton>
        <TaskButton $on aria-label="Word"><TaskWordLogo /></TaskButton>
        <TaskButton aria-label="Chrome"><Chrome /></TaskButton>
        <TaskButton><AdobeTile $line="#f0a030" $bg="#2b1404">Ai</AdobeTile></TaskButton>
        <TaskButton><AdobeTile $line="#7fb4f0" $bg="#0b1150">Ps</AdobeTile></TaskButton>
        <TaskButton aria-label="Steam"><Steam /></TaskButton>
        <TaskButton><AdobeTile $line="#e0358c" $bg="#37041f">Id</AdobeTile></TaskButton>
        <TaskButton aria-label="iTunes"><Music /></TaskButton>
        <TaskButton $w={44}><KTile>k</KTile></TaskButton>
        <TaskButton $running $w={44} aria-label="Pense-bête"><Icon w={18} h={18}><path d="M0 0h18v10l-8 8H0z" fill="#f3e58d" /><path d="M10 18v-8h8z" fill="#8d7f56" /></Icon></TaskButton>
        <TaskButton aria-label="Courrier"><Icon w={24} h={20}><path d="M0 7L12 0l12 7v12H0z" fill="#fff" /><path d="M3 7.500l18-.5-8 5 4 4z" fill="#50284b" /></Icon></TaskButton>
        <Tray>
          <TrayButton $w={34} aria-label="Icônes cachées"><Icon w={12} h={7}><path d="M.5 6.500L6 1l5.500 5.500" stroke="#fff" strokeWidth="1.200" /></Icon></TrayButton>
          <TrayButton $w={32} aria-label="Batterie"><Icon w={16} h={12}><path d="M4.500 3.500h10v7h-8" stroke="#fff" /><path d="M7 5h6v4H7zM15 5h1v4h-1z" fill="#fff" /><path d="M1.500 0v3M4.500 0v3M.5 3.500h5v2l-1.500 2h-2L.5 5.500zM3 7.500v3h2" stroke="#fff" /></Icon></TrayButton>
          <TrayButton $w={32} aria-label="Réseau"><Icon w={16} h={14}><path d="M5 2.500h10.500v7h-11V6M10 9.500v3M6 13h8M.5 .5h4v4h-4zM2.500 4.500V8H4" stroke="#fff" /></Icon></TrayButton>
          <TrayButton $w={30} aria-label="Son"><Icon w={15} h={12}><path d="M.5 3.500H3L6.500.8v10.400L3 8.500H.5zM9.500 3.500l5 5M14.500 3.500l-5 5" stroke="#fff" /></Icon></TrayButton>
          <TrayButton $w={42} aria-label="Stylet"><Icon w={17} h={17}><path d="M6.500 13Q4.500 10 12 1.500q2-1.500 3 0T7 13.500zM4 8q-3.500 1-3 4.500 1 4 5 1l5-6M12 8q3-2 4 0t-3 5" stroke="#fff" strokeWidth="1.200" /></Icon></TrayButton>
          <TrayButton $w={34}><span>FRA</span><span>CAFR</span></TrayButton>
          <TrayButton $w={72}><span>14:23</span><span>2017-09-16</span></TrayButton>
          <TrayButton $w={48} aria-label="Notifications : 1">
            <Icon w={26} h={26}><path d="M1 2h16v11H8l-3 4v-4H1z" fill="#fff" /><path d="M4 5.500h10M4 7.500h10M4 9.500h7" stroke="#50284b" /><circle cx="17" cy="17" r="7.500" fill="#7a1470" stroke="#b47bb0" /><text x="17" y="21" textAnchor="middle" fontSize="11" fontWeight="700" fill="#fff">1</text></Icon>
          </TrayButton>
          <ShowDesktop aria-label="Afficher le bureau" />
        </Tray>
      </Taskbar>
    </Window>
  );
}
